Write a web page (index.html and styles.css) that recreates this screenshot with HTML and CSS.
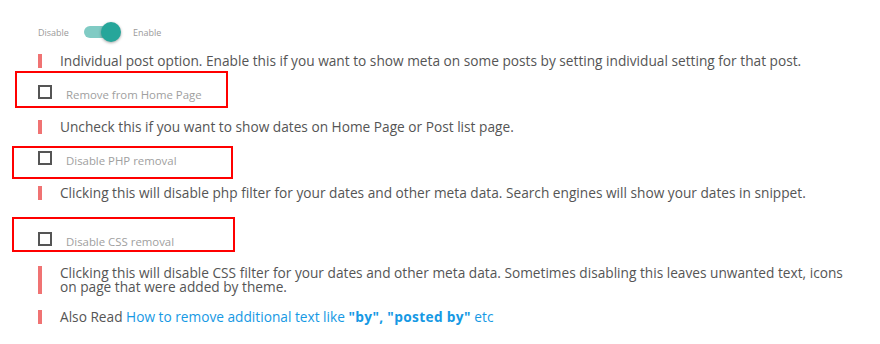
FILE: index.html
```html
<!DOCTYPE html>
<html lang="en">
<head>
<meta charset="utf-8">
<title>Date options</title>
<link rel="stylesheet" href="styles.css">
</head>
<body>
<div class="settings">
  <div class="switch-row">
    <span class="switch-label">Disable</span>
    <span class="switch">
      <span class="switch-track"></span>
      <span class="switch-knob"></span>
    </span>
    <span class="switch-label switch-label--on">Enable</span>
  </div>

  <p class="desc desc--first">Individual post option. Enable this if you want to show meta on some posts by setting individual setting for that post.</p>

  <div class="option">
    <span class="checkbox"></span>
    <span class="option-label">Remove from Home Page</span>
    <span class="mark mark--one"></span>
  </div>

  <p class="desc">Uncheck this if you want to show dates on Home Page or Post list page.</p>

  <div class="option">
    <span class="checkbox"></span>
    <span class="option-label">Disable PHP removal</span>
    <span class="mark mark--two"></span>
  </div>

  <p class="desc">Clicking this will disable php filter for your dates and other meta data. Search engines will show your dates in snippet.</p>

  <div class="option option--spaced">
    <span class="checkbox"></span>
    <span class="option-label">Disable CSS removal</span>
    <span class="mark mark--three"></span>
  </div>

  <p class="desc desc--after-css">Clicking this will disable CSS filter for your dates and other meta data. Sometimes disabling this leaves unwanted text, icons on page that were added by theme.</p>

  <p class="desc desc--last">Also Read <a class="link" href="#">How to remove additional text like <b>"by", "posted by"</b> etc</a></p>
</div>
</body>
</html>
```

FILE: styles.css
```css
html, body {
  margin: 0;
  padding: 0;
  background: #ffffff;
}

body {
  font-family: "Open Sans", "Noto Sans", sans-serif;
  color: #555555;
  width: 880px;
  height: 344px;
  overflow: hidden;
}

.settings {
  padding: 22px 20px 0 38px;
}

/* switch */
.switch-row {
  display: flex;
  align-items: center;
  height: 20px;
}

.switch-label {
  font-size: 9px;
  color: #9a9a9a;
  width: 46px;
}

.switch-label--on {
  width: auto;
  margin-left: 12px;
}

.switch {
  position: relative;
  width: 37px;
  height: 20px;
  display: block;
}

.switch-track {
  position: absolute;
  left: 0;
  top: 4px;
  width: 32px;
  height: 12px;
  border-radius: 6px;
  background: #80cbc4;
}

.switch-knob {
  position: absolute;
  left: 17px;
  top: 0;
  width: 20px;
  height: 20px;
  border-radius: 50%;
  background: #26a69a;
  box-shadow: 0 1px 3px rgba(0, 0, 0, 0.35);
}

/* descriptions */
.desc {
  margin: 21px 0 0 0;
  padding-left: 18px;
  border-left: 4px solid #f07373;
  font-size: 13.7px;
  line-height: 14px;
  color: #555555;
  max-width: 788px;
}

.desc--first {
  margin-top: 12px;
}

.desc--after-css {
  margin-top: 20px;
}

.desc--last {
  margin-top: 16px;
}

.link {
  color: #1699e4;
  text-decoration: none;
}

.link b {
  font-weight: 700;
  letter-spacing: 0.35px;
}

/* options */
.option {
  position: relative;
  display: flex;
  align-items: center;
  height: 14px;
  margin-top: 17px;
}

.option--spaced {
  margin-top: 32px;
}

.checkbox {
  box-sizing: border-box;
  width: 14px;
  height: 14px;
  border: 2px solid #555555;
  flex: none;
}

.option-label {
  margin-left: 14px;
  font-size: 11.4px;
  color: #a0a0a0;
  position: relative;
  top: 2px;
}

/* annotation outlines */
.mark {
  position: absolute;
  box-sizing: border-box;
  border: 2px solid #ff0000;
}

.mark--one {
  left: -23px;
  top: -14px;
  width: 213px;
  height: 37px;
}

.mark--two {
  left: -26px;
  top: -5px;
  width: 221px;
  height: 33px;
}

.mark--three {
  left: -26px;
  top: -15px;
  width: 223px;
  height: 35px;
}
```
